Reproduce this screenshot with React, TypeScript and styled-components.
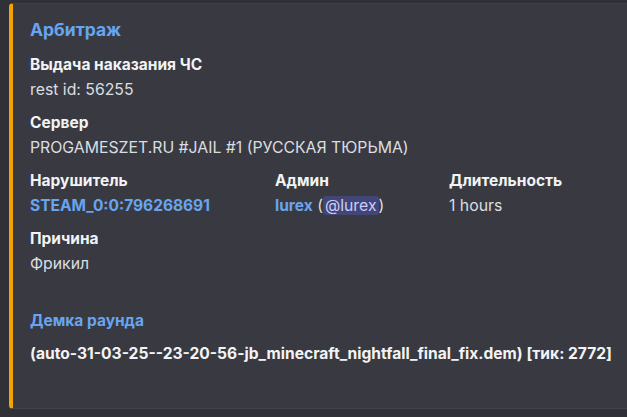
import styled, { createGlobalStyle } from 'styled-components';

const GlobalStyle = createGlobalStyle`
  body {
    margin: 0;
    background: #303136;
    font-family: Inter, 'Noto Sans', sans-serif;
    overflow: hidden;
  }
`;

const Page = styled.div({
  padding: '3px 0 0 9px',
  height: '417px',
  boxSizing: 'border-box'
});

const Embed = styled.div({
  width: '640px',
  boxSizing: 'border-box',
  backgroundColor: '#393a41',
  borderLeft: '4px solid #f5a300',
  borderTop: '1px solid #3f4047',
  borderBottom: '1px solid #44454c',
  borderRadius: '4px 0 0 4px',
  padding: '14px 0 43px 17px',
  display: 'flex',
  flexDirection: 'column'
});

const Title = styled.div({
  fontSize: '17.5px',
  lineHeight: '24px',
  fontWeight: 700,
  color: '#68a5f0',
  marginBottom: '12px'
});

const Fields = styled.div({
  display: 'grid',
  gridTemplateColumns: '245px 174px 1fr',
  rowGap: '11px'
});

const Field = styled.div<{ $inline?: boolean }>(props => ({
  gridColumn: props.$inline ? 'auto' : '1 / -1'
}));

const FieldName = styled.div({
  fontSize: '15.5px',
  lineHeight: '22px',
  fontWeight: 700,
  color: '#f2f3f5',
  marginBottom: '3px'
});

const FieldValue = styled.div({
  fontSize: '15.8px',
  lineHeight: '22px',
  color: '#dbdee1'
});

const Link = styled.span({
  color: '#68a5f0',
  fontWeight: 700,
  fontSize: '15.5px'
});

const Mention = styled.span({
  backgroundColor: 'rgba(88, 101, 242, 0.3)',
  color: '#c9cdfb',
  borderRadius: '3px',
  padding: '0 2px'
});

const Demo = styled.div({
  marginTop: '35px',
  display: 'flex',
  flexDirection: 'column',
  gap: '11px'
});

const DemoLink = styled.div({
  fontSize: '15.5px',
  lineHeight: '22px',
  fontWeight: 700,
  color: '#68a5f0'
});

const DemoFile = styled.div({
  fontSize: '15.6px',
  lineHeight: '22px',
  fontWeight: 700,
  color: '#f2f3f5'
});

export default function App() {
  return (
    <>
      <GlobalStyle />
      <Page>
        <Embed>
          <Title>Арбитраж</Title>
          <Fields>
            <Field>
              <FieldName>Выдача наказания ЧС</FieldName>
              <FieldValue>rest id: 56255</FieldValue>
            </Field>
            <Field>
              <FieldName>Сервер</FieldName>
              <FieldValue>PROGAMESZET.RU #JAIL #1 (РУССКАЯ ТЮРЬМА)</FieldValue>
            </Field>
            <Field $inline>
              <FieldName>Нарушитель</FieldName>
              <FieldValue>
                <Link>STEAM_0:0:796268691</Link>
              </FieldValue>
            </Field>
            <Field $inline>
              <FieldName>Админ</FieldName>
              <FieldValue>
                <Link>lurex</Link> (<Mention>@lurex</Mention>)
              </FieldValue>
            </Field>
            <Field $inline>
              <FieldName>Длительность</FieldName>
              <FieldValue>1 hours</FieldValue>
            </Field>
            <Field>
              <FieldName>Причина</FieldName>
              <FieldValue>Фрикил</FieldValue>
            </Field>
          </Fields>
          <Demo>
            <DemoLink>Демка раунда</DemoLink>
            <DemoFile>(auto-31-03-25--23-20-56-jb_minecraft_nightfall_final_fix.dem) [тик: 2772]</DemoFile>
          </Demo>
        </Embed>
      </Page>
    </>
  );
}
